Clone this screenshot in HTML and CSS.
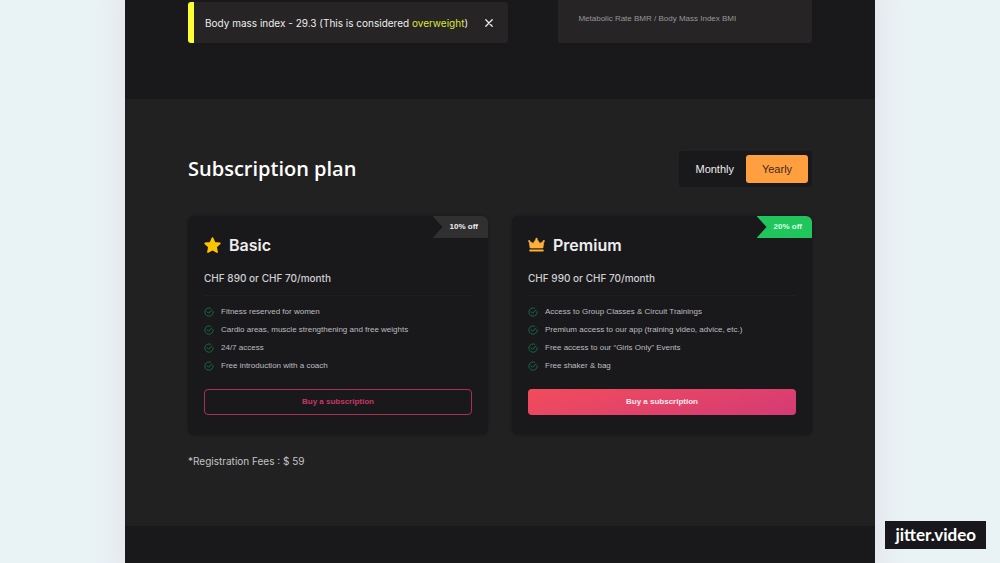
FILE: index.html
```html
<!DOCTYPE html>
<html lang="en">
<head>
<meta charset="utf-8">
<meta name="viewport" content="width=device-width, initial-scale=1">
<title>Subscription plan</title>
<link rel="stylesheet" href="styles.css">
</head>
<body>
<svg class="sprite" aria-hidden="true">
  <symbol id="check" viewBox="0 0 24 24">
    <path d="M22 11v1a10 10 0 1 1-6-9.1" fill="none" stroke="currentColor" stroke-width="2" stroke-linecap="round"/>
    <path d="M7.500 11.500l3.500 3.500 8-8" fill="none" stroke="currentColor" stroke-width="2.200" stroke-linecap="round" stroke-linejoin="round"/>
  </symbol>
</svg>
<main class="page">
  <section class="results">
    <div class="alert" role="status">
      <p class="alert-text">Body mass index - 29.3 (This is considered <span class="warn">overweight</span>)</p>
      <button class="close" type="button" aria-label="Close">
        <svg class="close-icon" viewBox="0 0 8 8" aria-hidden="true"><path d="M.8.8l6.400 6.400M7.200.8L.8 7.200" stroke="currentColor" stroke-width="1.300" stroke-linecap="round"/></svg>
      </button>
    </div>
    <div class="note">Metabolic Rate BMR / Body Mass Index BMI</div>
  </section>

  <section class="plans">
    <header class="plans-head">
      <h1 class="title">Subscription plan</h1>
      <div class="toggle">
        <button class="toggle-option" type="button">Monthly</button>
        <button class="toggle-option active" type="button">Yearly</button>
      </div>
    </header>
    <div class="cards">
      <article class="card">
        <span class="badge">10% off</span>
        <h2 class="plan-name">
          <svg class="plan-icon" viewBox="0 0 24 24" aria-hidden="true"><path d="M12 1.500l3 6.600 7.300 1-5.300 5 1.400 7.200-6.400-3.500-6.400 3.500L7 14.100l-5.300-5 7.300-1z" fill="#ffc400" stroke="#ffc400" stroke-width="2.400" stroke-linejoin="round"/></svg>
          Basic
        </h2>
        <p class="price">CHF 890 or CHF 70/month</p>
        <ul class="features">
          <li class="feature"><svg class="check" aria-hidden="true"><use href="#check"/></svg>Fitness reserved for women</li>
          <li class="feature"><svg class="check" aria-hidden="true"><use href="#check"/></svg>Cardio areas, muscle strengthening and free weights</li>
          <li class="feature"><svg class="check" aria-hidden="true"><use href="#check"/></svg>24/7 access</li>
          <li class="feature"><svg class="check" aria-hidden="true"><use href="#check"/></svg>Free introduction with a coach</li>
        </ul>
        <button class="buy outline" type="button">Buy a subscription</button>
      </article>
      <article class="card">
        <span class="badge green">20% off</span>
        <h2 class="plan-name">
          <svg class="plan-icon" viewBox="0 0 24 24" aria-hidden="true"><path d="M1.500 5.500l5.800 3.500L12 2l4.700 7 5.800-3.500L21 15.500H3z" fill="#ffb03a" stroke="#ffb03a" stroke-linejoin="round"/><circle cx="1.600" cy="5.500" r="1.300" fill="#ffb03a"/><circle cx="12" cy="2.400" r="1.400" fill="#ffb03a"/><circle cx="22.400" cy="5.500" r="1.300" fill="#ffb03a"/><path d="M3 19h18" stroke="#ffb03a" stroke-width="2.600" stroke-linecap="round"/></svg>
          Premium
        </h2>
        <p class="price">CHF 990 or CHF 70/month</p>
        <ul class="features">
          <li class="feature"><svg class="check" aria-hidden="true"><use href="#check"/></svg>Access to Group Classes &amp; Circuit Trainings</li>
          <li class="feature"><svg class="check" aria-hidden="true"><use href="#check"/></svg>Premium access to our app (training video, advice, etc.)</li>
          <li class="feature"><svg class="check" aria-hidden="true"><use href="#check"/></svg>Free access to our “Girls Only” Events</li>
          <li class="feature"><svg class="check" aria-hidden="true"><use href="#check"/></svg>Free shaker &amp; bag</li>
        </ul>
        <button class="buy" type="button">Buy a subscription</button>
      </article>
    </div>
    <p class="fees">*Registration Fees : $ 59</p>
  </section>
</main>
<div class="watermark">jitter.video</div>
</body>
</html>
```
FILE: styles.css
```css
* {
  box-sizing: border-box;
  margin: 0;
  padding: 0;
}

body {
  min-height: 100vh;
  display: flex;
  justify-content: center;
  background: #e9f2f5;
  color: #eeeeef;
  font-family: Inter, "Liberation Sans", Arial, sans-serif;
  font-size: 10px;
  line-height: 16px;
}

button {
  border: 0;
  background: none;
  color: inherit;
  font: inherit;
  cursor: pointer;
}

.sprite {
  position: absolute;
  width: 0;
  height: 0;
}

.page {
  width: 75%;
  background: #19191b;
  box-shadow: 0 0 20px 10px #e5e7ed;
}

.results {
  display: flex;
  justify-content: space-between;
  align-items: flex-end;
  gap: 50px;
  padding: 0 63px 56px;
}

.alert {
  flex: 0 1 321px;
  display: flex;
  align-items: center;
  justify-content: space-between;
  padding: 13px 14px 12px 11px;
  margin-top: 2px;
  border-left: 6px solid #fbff33;
  border-radius: 3px;
  background: #262425;
}

.warn {
  color: #dfe53a;
}

.close {
  display: flex;
  padding: 1px;
}

.close-icon {
  width: 8px;
  height: 8px;
}

.note {
  flex: 0 1 254px;
  padding: 11px 20px 16px;
  border-radius: 0 0 3px 3px;
  background: #262425;
  color: #98979a;
  font-family: "Liberation Sans", Arial, sans-serif;
  font-size: 8px;
}

.plans {
  padding: 52px 63px 57px;
  background: #212121;
}

.plans-head {
  display: flex;
  align-items: center;
  justify-content: space-between;
}

.title {
  font: 600 20px/36px "Open Sans", sans-serif;
  color: #fff;
}

.toggle {
  display: flex;
  padding: 4px;
  border-radius: 3px;
  background: #19191b;
  font-family: "Liberation Sans", Arial, sans-serif;
  font-size: 11px;
}

.toggle-option {
  min-width: 62px;
  padding: 6px 12px;
  border-radius: 3px;
}

.toggle-option.active {
  background: #ff9f40;
  color: #3c2a1c;
}

.cards {
  display: grid;
  grid-template-columns: 1fr 1fr;
  gap: 24px;
  margin-top: 29px;
}

.card {
  position: relative;
  padding: 17px 16px 20px;
  border-radius: 6px;
  background: #19191b;
  box-shadow: 0 0 3px #19191b;
}

.badge {
  position: absolute;
  top: 0;
  right: 0;
  padding: 3px 10px 3px 17px;
  border-radius: 0 6px 0 0;
  background: #303031;
  clip-path: polygon(0 0, 100% 0, 100% 100%, 0 100%, 10px 50%);
  font-family: "Liberation Sans", Arial, sans-serif;
  font-size: 8px;
  font-weight: 700;
}

.badge.green {
  background: #20c65c;
  color: #d9ffe6;
}

.plan-name {
  display: flex;
  align-items: center;
  gap: 8px;
  font: 600 16px/24px Inter, sans-serif;
}

.plan-icon {
  width: 17px;
  height: 17px;
}

.price {
  padding: 13px 0 9px;
  border-bottom: 1px solid #1f1f21;
  color: #cfcfd1;
  font-weight: 500;
}

.features {
  display: grid;
  gap: 2px;
  padding: 8px 0 15px;
  list-style: none;
  color: #bdbdc0;
  font-family: "Liberation Sans", Arial, sans-serif;
  font-size: 8px;
}

.feature {
  display: flex;
  align-items: center;
  gap: 7px;
}

.check {
  width: 10px;
  height: 10px;
  color: #147a4a;
}

.buy {
  width: 100%;
  padding: 4px;
  border: 1px solid transparent;
  border-radius: 4px;
  background: linear-gradient(165deg, #f24c5b, #d43b76) border-box;
  color: #ffe9ee;
  font-family: "Liberation Sans", Arial, sans-serif;
  font-size: 8px;
  font-weight: 700;
}

.buy.outline {
  border-color: #a93055;
  background: none;
  color: #c93662;
}

.fees {
  margin-top: 18px;
  color: #c4c4c5;
}

.watermark {
  position: fixed;
  right: 14px;
  bottom: 14px;
  padding: 2px 10px;
  background: #17171c;
  color: #fff;
  font: 700 17px/24px Lato, sans-serif;
}
```
